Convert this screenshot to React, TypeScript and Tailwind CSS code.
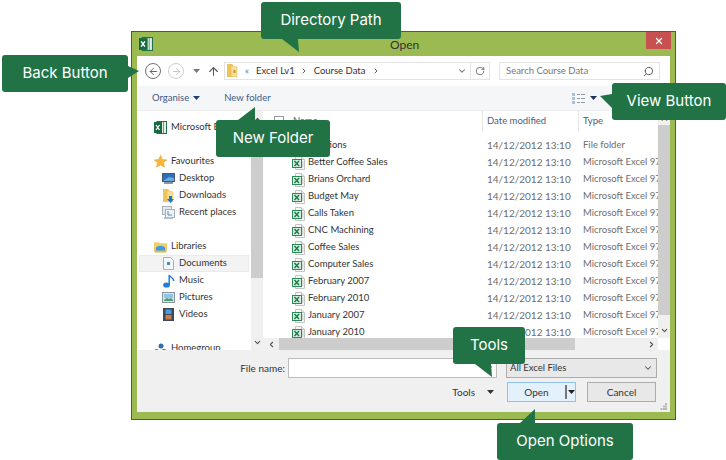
import React from 'react';
import { ArrowLeft, ArrowRight, ArrowUp, ChevronDown, ChevronLeft, ChevronRight, ChevronUp, RotateCw, Search, X } from 'lucide-react';

const files = [
    'Solutions',
    'Better Coffee Sales',
    'Brians Orchard',
    'Budget May',
    'Calls Taken',
    'CNC Machining',
    'Coffee Sales',
    'Computer Sales',
    'February 2007',
    'February 2010',
    'January 2007',
    'January 2010',
];

// small triangle used by the drop downs
const Caret = ({ className = '' }: { className?: string }) => (
    <svg width="7" height="4" viewBox="0 0 7 4" className={className}>
        <path d="M0 0h7L3.5 4z" fill="currentColor" />
    </svg>
);

const XlsFileIcon = () => (
    <svg width="13" height="14" viewBox="0 0 13 14" className="shrink-0">
        <path d="M3.5.5h6l3 3v10h-9z" fill="#f7f7f7" stroke="#c4c4c4" />
        <path d="M9.5.5v3h3" fill="#e6e6e6" stroke="#c4c4c4" />
        <rect x="0.5" y="3.5" width="9" height="8" fill="#d5ebdc" stroke="#2b8a57" />
        <path d="M2.5 5l4.5 5M7 5l-4.5 5" stroke="#1f7a4a" strokeWidth="1.4" />
        <path d="M10 6h1.5M10 8h1.5M10 10h1.5" stroke="#a8b8ae" />
    </svg>
);

const ExcelLogo = ({ size = 13 }: { size?: number }) => (
    <svg width={size} height={size} viewBox="0 0 13 13" className="shrink-0">
        <rect x="3" y="0.5" width="9.5" height="12" fill="#e4efe8" stroke="#217346" />
        <path d="M9.5 1v11" stroke="#5fa67f" />
        <rect x="0" y="1" width="8" height="11" fill="#17693e" />
        <path d="M2 4l3.5 5M5.5 4L2 9" stroke="#fff" strokeWidth="1.3" />
    </svg>
);

const StarIcon = () => (
    <svg width="13" height="13" viewBox="0 0 13 13">
        <path d="M6.5.3l1.9 4.1 4.4.5-3.3 2.9 1 4.4-4-2.3-4 2.3 1-4.4L.2 4.9l4.4-.5z" fill="#f9b53a" stroke="#ea9a2c" strokeWidth="0.5" />
    </svg>
);

const DesktopIcon = () => (
    <svg width="13" height="11" viewBox="0 0 13 11">
        <rect x="0.5" y="0.5" width="12" height="8" fill="#2a6fb8" stroke="#4a5a6c" />
        <path d="M1 8l6-4 5 1v3z" fill="#6aa9e0" />
        <rect x="2" y="9" width="9" height="2" fill="#8b97a3" />
    </svg>
);

const FolderIcon = ({ down = false }: { down?: boolean }) => (
    <svg width="11" height="14" viewBox="0 0 11 14">
        <path d="M0 0h5l1 1v12H0z" fill="#efc25c" />
        <path d="M4 1.5l6 1.5v10l-6-1z" fill="#f8df94" stroke="#dcb456" strokeWidth="0.5" />
        {!down && <path d="M6.5 6h2v3h-2z" fill="#c59a3a" />}
        {down && <path d="M6 7h3v3h2l-3.5 4L4 10h2z" fill="#1b78c8" />}
    </svg>
);

const RecentIcon = () => (
    <svg width="13" height="13" viewBox="0 0 13 13">
        <rect x="0.5" y="0.5" width="9" height="8" fill="#e3e8ec" stroke="#a7b1b9" />
        <rect x="3.5" y="3.5" width="9" height="8" fill="#eef2f5" stroke="#a7b1b9" />
        <path d="M6 5v4h4" stroke="#4d90c9" fill="none" />
        <rect x="2" y="11" width="9" height="2" fill="#b6bdc3" />
    </svg>
);

const LibrariesIcon = () => (
    <svg width="14" height="12" viewBox="0 0 14 12">
        <path d="M0 1h5l1 1h8v9H0z" fill="#f3cd6c" />
        <path d="M2 7c2-3 8-3 10 0v3H2z" fill="#3d9be0" />
        <rect x="1" y="10" width="12" height="2" fill="#e8b644" />
    </svg>
);

const DocIcon = () => (
    <svg width="11" height="13" viewBox="0 0 11 13">
        <path d="M.5.5h7l3 3v9H.5z" fill="#f4f7fa" stroke="#a7b0b9" />
        <rect x="4" y="5" width="3" height="3" fill="#4d86bb" />
    </svg>
);

const MusicIcon = () => (
    <svg width="12" height="14" viewBox="0 0 12 14">
        <ellipse cx="3.5" cy="11" rx="3.4" ry="2.6" fill="#1f7fd8" />
        <path d="M6.2 11V1c1 2.5 4.5 2.5 4.5 6" stroke="#1f7fd8" strokeWidth="1.5" fill="none" />
    </svg>
);

const PictureIcon = () => (
    <svg width="13" height="11" viewBox="0 0 13 11">
        <rect x="0.5" y="0.5" width="12" height="10" fill="#dde2e6" stroke="#8b949c" />
        <rect x="2" y="2" width="9" height="4" fill="#8fc7ea" />
        <path d="M2 8l3-2 2 1 2-1 2 2v1H2z" fill="#4b9a7c" />
    </svg>
);

const VideoIcon = () => (
    <svg width="11" height="13" viewBox="0 0 11 13">
        <rect width="11" height="13" fill="#37495b" />
        <rect x="2.5" y="1.5" width="6" height="4.5" fill="#4f9bd6" />
        <rect x="2.5" y="7" width="6" height="4.5" fill="#cf7a4a" />
    </svg>
);

const HomegroupIcon = () => (
    <svg width="13" height="12" viewBox="0 0 13 12">
        <circle cx="7" cy="3" r="2.5" fill="#2e6fb3" />
        <circle cx="2.5" cy="8.5" r="2.4" fill="#3f9a4a" />
        <circle cx="10" cy="8.5" r="2.6" fill="#2e6fb3" />
        <circle cx="6.5" cy="8" r="1.3" fill="#7fc06a" />
    </svg>
);

const navGroups = [
    [{ label: 'Microsoft Excel', icon: <ExcelLogo />, child: false }],
    [
        { label: 'Favourites', icon: <StarIcon />, child: false },
        { label: 'Desktop', icon: <DesktopIcon />, child: true },
        { label: 'Downloads', icon: <FolderIcon down />, child: true },
        { label: 'Recent places', icon: <RecentIcon />, child: true },
    ],
    [
        { label: 'Libraries', icon: <LibrariesIcon />, child: false },
        { label: 'Documents', icon: <DocIcon />, child: true, selected: true },
        { label: 'Music', icon: <MusicIcon />, child: true },
        { label: 'Pictures', icon: <PictureIcon />, child: true },
        { label: 'Videos', icon: <VideoIcon />, child: true },
    ],
    [{ label: 'Homegroup', icon: <HomegroupIcon />, child: false }],
];

const Callout = ({ label, className, tail }: { label: string; className: string; tail: React.ReactNode }) => (
    <div className={`absolute flex h-[37px] items-center justify-center rounded-[3px] bg-[#217346] font-["Inter",sans-serif] text-[15px] text-white ${className}`}>
        {label}
        {tail}
    </div>
);

const Toolbar = () => (
    <div className="flex h-[30px] shrink-0 items-center bg-white">
        <div className="ml-[8px] flex h-[16px] w-[16px] items-center justify-center rounded-full border border-[#6f6f6f] text-[#555]">
            <ArrowLeft size={11} strokeWidth={2} />
        </div>
        <div className="ml-[7px] flex h-[16px] w-[16px] items-center justify-center rounded-full border border-[#cfcfcf] text-[#c4c4c4]">
            <ArrowRight size={11} strokeWidth={2} />
        </div>
        <Caret className="ml-[9px] text-[#777]" />
        <ArrowUp size={13} strokeWidth={2} className="ml-[7px] text-[#555]" />
        <div className="ml-[4px] flex h-[18px] w-[266px] items-center border border-[#e3e3e3] text-[9.5px] text-[#333]">
            <div className="ml-[2px] flex"><FolderIcon /></div>
            <span className="ml-[7px] text-[#777]">«</span>
            <span className="ml-[7px]">Excel Lv1</span>
            <ChevronRight size={8} strokeWidth={3} className="ml-[5px] text-[#666]" />
            <span className="ml-[6px]">Course Data</span>
            <ChevronRight size={8} strokeWidth={3} className="ml-[7px] text-[#666]" />
            <ChevronDown size={10} strokeWidth={2.5} className="ml-auto mr-[3px] text-[#666]" />
            <div className="flex h-full w-[19px] items-center justify-center border-l border-[#e3e3e3] text-[#666]">
                <RotateCw size={10} strokeWidth={2} />
            </div>
        </div>
        <div className="ml-[9px] flex h-[18px] w-[161px] items-center justify-between border border-[#e3e3e3] pl-[6px] pr-[5px] text-[9.5px] text-[#777]">
            <span>Search Course Data</span>
            <Search size={11} strokeWidth={2} className="-scale-x-100 text-[#555]" />
        </div>
    </div>
);

const CommandBar = () => (
    <div className="relative flex h-[25px] shrink-0 items-center border-b border-[#ececec] bg-[#f5f6f7] text-[9.5px] text-[#3b5a85]">
        <span className="ml-[15px]">Organise</span>
        <Caret className="ml-[4px] text-[#1f3f70]" />
        <span className="ml-[24px]">New folder</span>
        <svg width="13" height="11" viewBox="0 0 13 11" className="ml-auto">
            <path d="M0 0h3v3H0zM0 4h3v3H0zM0 8h3v3H0z" fill="#a9c2dc" />
            <path d="M5 1.5h3M9 1.5h4M5 5.5h3M9 5.5h4M5 9.5h3M9 9.5h4" stroke="#8e99a5" />
        </svg>
        <Caret className="ml-[5px] mr-[73px] text-[#1f2f60]" />
    </div>
);

const Sidebar = () => (
    <div className="flex shrink-0">
        <div className="h-[239px] w-[114px] overflow-hidden bg-white pt-[8px] text-[9.5px] text-[#333]">
            {navGroups.map((group, i) => (
                <div key={i} className={i > 0 ? 'mt-[17px]' : ''}>
                    {group.map((item: any) => (
                        <div
                            key={item.label}
                            className={`mx-[2px] flex h-[17px] items-center whitespace-nowrap border ${item.selected ? 'border-[#ebebeb] bg-[#f3f3f3]' : 'border-transparent'} ${item.child ? 'pl-[22px]' : 'pl-[14px]'}`}
                        >
                            <span className="flex w-[13px] shrink-0 justify-center">{item.icon}</span>
                            <span className="ml-[4px]">{item.label}</span>
                        </div>
                    ))}
                </div>
            ))}
        </div>
        <div className="flex h-[239px] w-[12px] flex-col items-center bg-[#f0f0f0] text-[#555]">
            <ChevronUp size={9} strokeWidth={3} className="mt-[3px] h-[11px] shrink-0" />
            <div className="h-[153px] w-full bg-[#cdcdcd]" />
            <ChevronDown size={9} strokeWidth={3} className="mt-auto mb-[3px]" />
        </div>
    </div>
);

const FileList = () => (
    <div className="flex min-w-0 flex-1 flex-col bg-white">
        <div className="flex h-[227px] shrink-0">
            <div className="min-w-0 flex-1 overflow-hidden text-[9.5px]">
                <div className="flex h-[20px] items-center text-[#4c607a]">
                    <div className="flex h-full w-[219px] shrink-0 items-center pl-[11px]">
                        <div className="h-[10px] w-[10px] border border-[#999]" />
                        <span className="ml-[9px]">Name</span>
                    </div>
                    <div className="flex h-full w-[96px] shrink-0 items-center border-l border-[#e5e5e5] pl-[4px]">Date modified</div>
                    <div className="flex h-full flex-1 items-center border-l border-[#e5e5e5] pl-[4px]">Type</div>
                </div>
                <div className="pt-[6px]">
                    {files.map((name, i) => (
                        <div key={name} className="flex h-[17px] items-center whitespace-nowrap">
                            <div className="flex w-[219px] shrink-0 items-center pl-[29px] text-[#333]">
                                {i > 0 && <XlsFileIcon />}
                                <span className={i > 0 ? 'ml-[3px]' : 'ml-[16px]'}>{name}</span>
                            </div>
                            <div className="w-[96px] shrink-0 pl-[5px] text-[10px] text-[#6d6d6d]">14/12/2012 13:10</div>
                            <div className="pl-[5px] text-[#6d6d6d]">{i === 0 ? 'File folder' : 'Microsoft Excel 97-2003'}</div>
                        </div>
                    ))}
                </div>
            </div>
            <div className="flex w-[12px] shrink-0 flex-col items-center bg-[#f0f0f0] text-[#555]">
                <ChevronUp size={9} strokeWidth={3} className="mt-[2px] h-[12px] shrink-0" />
                <div className="h-[190px] w-full bg-[#cdcdcd]" />
                <ChevronDown size={9} strokeWidth={3} className="mt-auto mb-[3px]" />
            </div>
        </div>
        <div className="flex h-[12px] shrink-0 items-center">
            <div className="flex h-full flex-1 items-center bg-[#f0f0f0] text-[#555]">
                <ChevronLeft size={9} strokeWidth={3} className="ml-[4px] w-[9px]" />
                <div className="ml-[3px] h-full w-[296px] bg-[#cdcdcd]" />
                <ChevronRight size={9} strokeWidth={3} className="ml-auto mr-[2px]" />
            </div>
            <div className="h-full w-[12px] bg-white" />
        </div>
    </div>
);

const BottomPanel = () => (
    <div className="relative h-[62px] shrink-0 bg-[#f0f0f0] pt-[8px] text-[10px] text-[#333]">
        <div className="flex h-[20px] items-center justify-end pr-[13px]">
            <span className="mr-[3px]">File name:</span>
            <div className="flex h-[20px] w-[209px] items-center justify-end border border-[#bdbdbd] bg-white pr-[2px] text-[#555]">
                <ChevronDown size={10} strokeWidth={2.5} />
            </div>
            <div className="ml-[9px] flex h-[20px] w-[151px] items-center justify-between border border-[#acacac] bg-[#e8e8e8] pl-[3px] pr-[3px]">
                <span className="text-[9.5px]">All Excel Files</span>
                <ChevronDown size={10} strokeWidth={2.5} className="text-[#555]" />
            </div>
        </div>
        <div className="mt-[4px] flex h-[20px] items-center justify-end pr-[14px]">
            <span>Tools</span>
            <Caret className="ml-[12px] text-[#333]" />
            <div className="ml-[13px] flex h-[20px] w-[69px] items-center border border-[#8fc0ef] bg-[#e3f1fd]">
                <span className="w-[57px] text-center">Open</span>
                <div className="h-[14px] w-[2px] bg-[#777]" />
                <Caret className="ml-[1px] text-[#222]" />
            </div>
            <div className="ml-[11px] flex h-[20px] w-[69px] items-center justify-center border border-[#acacac] bg-[#e8e8e8]">Cancel</div>
        </div>
        <svg width="7" height="7" viewBox="0 0 7 7" className="absolute bottom-[2px] right-[3px]">
            <path d="M5 0h2v2H5zM3 2.5h2v2H3zM5 2.5h2v2H5zM0.5 5h2v2h-2zM3 5h2v2H3zM5 5h2v2H5z" fill="#b9b9b9" />
        </svg>
    </div>
);

export default function App() {
    return (
        <div className='relative h-[460px] w-[726px] overflow-hidden bg-white pl-[131px] pt-[31px] font-["Lato","Open_Sans",sans-serif]'>
            {/* dialog window */}
            <div className="flex h-[389px] w-[545px] flex-col border border-[#217346] bg-[#9bbb52] px-[5px] pb-[7px]">
                <div className="relative flex h-[24px] shrink-0 items-center">
                    <div className="ml-[2px] flex"><ExcelLogo size={14} /></div>
                    <span className="absolute left-[253px] top-[4px] text-[12px] text-[#333]">Open</span>
                    <div className="absolute right-[-1px] top-0 flex h-[17px] w-[25px] items-center justify-center bg-[#c75050] text-white">
                        <X size={10} strokeWidth={3} />
                    </div>
                </div>
                <Toolbar />
                <CommandBar />
                <div className="flex h-[239px] shrink-0">
                    <Sidebar />
                    <FileList />
                </div>
                <BottomPanel />
            </div>

            {/* callouts */}
            <Callout
                label="Directory Path"
                className="left-[261px] top-[2px] w-[140px]"
                tail={<svg width="18" height="14" viewBox="0 0 18 14" className="absolute left-[21px] top-[37px]"><path d="M0 0h16l1 13z" fill="#217346" /></svg>}
            />
            <Callout
                label="Back Button"
                className="left-[2px] top-[55px] w-[126px]"
                tail={<svg width="11" height="12" viewBox="0 0 11 12" className="absolute left-[126px] top-[11px]"><path d="M0 0l11 5-11 7z" fill="#217346" /></svg>}
            />
            <Callout
                label="New Folder"
                className="left-[216px] top-[120px] w-[114px]"
                tail={<svg width="18" height="13" viewBox="0 0 18 13" className="absolute left-[22px] top-[-13px]"><path d="M0 13L17 0v13z" fill="#217346" /></svg>}
            />
            <Callout
                label="View Button"
                className="left-[612px] top-[83px] w-[114px]"
                tail={<svg width="12" height="14" viewBox="0 0 12 14" className="absolute left-[-12px] top-[11px]"><path d="M12 0L0 2l12 12z" fill="#217346" /></svg>}
            />
            <Callout
                label="Tools"
                className="left-[453px] top-[327px] w-[72px]"
                tail={<svg width="18" height="13" viewBox="0 0 18 13" className="absolute left-[22px] top-[37px]"><path d="M0 0h16l1 13z" fill="#217346" /></svg>}
            />
            <Callout
                label="Open Options"
                className="left-[497px] top-[423px] w-[136px]"
                tail={<svg width="16" height="14" viewBox="0 0 16 14" className="absolute left-[23px] top-[-14px]"><path d="M0 14L15 0v14z" fill="#217346" /></svg>}
            />
        </div>
    );
}
